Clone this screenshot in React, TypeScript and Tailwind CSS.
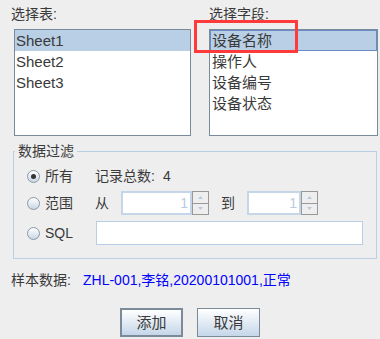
import React from 'react';

const FONT = 'font-["Liberation_Sans","Noto_Sans_CJK_SC",sans-serif]';

const TABLES = ['Sheet1', 'Sheet2', 'Sheet3'];
const FIELDS = ['设备名称', '操作人', '设备编号', '设备状态'];

const Radio = ({ checked }: { checked?: boolean }) => (
  <span className="w-[13px] h-[13px] rounded-full border border-[#8a98a8] bg-gradient-to-b from-[#ffffff] to-[#c9d6e4] flex items-center justify-center shrink-0">
    {checked && <span className="w-[5px] h-[5px] rounded-full bg-[#333333]" />}
  </span>
);

const Spinner = ({ width }: { width: string }) => (
  <div className="flex h-[24px]">
    <div className={`${width} h-full bg-white border-2 border-[#c5d6e8] flex items-center justify-end pr-[2px] text-[#b8cbe0] text-[14px]`}>
      1
    </div>
    <div className="w-[17px] h-full flex flex-col">
      <div className="flex-1 border border-[#999999] bg-[#eeeeee] flex items-center justify-center">
        <svg width="5" height="3" viewBox="0 0 5 3"><path d="M0 3 L2.5 0 L5 3 Z" fill="#b8cbe0" /></svg>
      </div>
      <div className="flex-1 border border-t-0 border-[#999999] bg-[#eeeeee] flex items-center justify-center">
        <svg width="5" height="3" viewBox="0 0 5 3"><path d="M0 0 L2.5 3 L5 0 Z" fill="#b8cbe0" /></svg>
      </div>
    </div>
  </div>
);

export default function App() {
  return (
    <div className={`w-[380px] h-[339px] bg-[#eeeeee] relative overflow-hidden text-[14px] text-[#3a3a3a] ${FONT}`}>
      {/* lists */}
      <div className="flex pt-[4px]">
        <div className="ml-[11px] w-[198px] shrink-0">
          <div className="h-[20px] leading-[20px]">选择表:</div>
          <div className="mt-[5px] ml-[3px] w-[177px] h-[107px] bg-white border border-[#7a8a99]">
            {TABLES.map((t, i) => (
              <div key={t} className={`h-[21px] leading-[21px] pl-[1px] text-[15px] ${i === 0 ? 'bg-[#b8cfe5]' : ''}`}>
                {t}
              </div>
            ))}
          </div>
        </div>
        <div className="w-[169px] shrink-0">
          <div className="h-[20px] leading-[20px]">选择字段:</div>
          <div className="mt-[5px] w-[169px] h-[107px] bg-white border border-[#7a8a99]">
            {FIELDS.map((f, i) => (
              <div key={f} className={`h-[21px] leading-[19px] pl-[1px] text-[15px] ${i === 0 ? 'bg-[#b8cfe5] border border-[#6a8cc6]' : 'border border-transparent'}`}>
                {f}
              </div>
            ))}
          </div>
        </div>
      </div>

      {/* annotation box */}
      <div className="absolute left-[194px] top-[20px] w-[104px] h-[33px] border-[3px] border-[#ff3a3a]" />

      {/* filter group */}
      <fieldset className="ml-[13px] mt-[7px] w-[364px] border border-[#b8cfe5] pb-[13px]">
        <legend className="ml-[1px] px-[3px] leading-[16px]">数据过滤</legend>
        <div className="mt-[5px] h-[24px] flex items-center pl-[13px]">
          <Radio checked />
          <span className="ml-[5px] w-[50px]">所有</span>
          <span>记录总数:</span>
          <span className="ml-[8px]">4</span>
        </div>
        <div className="mt-[3px] h-[24px] flex items-center pl-[13px]">
          <Radio />
          <span className="ml-[5px] w-[50px]">范围</span>
          <span className="w-[26px]">从</span>
          <Spinner width="w-[71px]" />
          <span className="ml-[12px] w-[26px]">到</span>
          <Spinner width="w-[54px]" />
        </div>
        <div className="mt-[6px] h-[24px] flex items-center pl-[13px]">
          <Radio />
          <span className="ml-[5px] w-[51px]">SQL</span>
          <div className="w-[267px] h-[24px] bg-white border border-[#b8cfe5]" />
        </div>
      </fieldset>

      {/* sample */}
      <div className="mt-[11px] ml-[11px] h-[20px] leading-[20px] flex">
        <span className="w-[72px]">样本数据:</span>
        <span className="text-[#0000ff]">ZHL-001,李铭,20200101001,正常</span>
      </div>

      {/* buttons */}
      <div className="mt-[18px] flex justify-center gap-[14px]">
        <button className="w-[63px] h-[29px] border-2 border-[#7a8a99] bg-gradient-to-b from-[#ffffff] to-[#c5d6e9] text-[15px] leading-none">
          添加
        </button>
        <button className="w-[63px] h-[29px] border border-[#7a8a99] bg-gradient-to-b from-[#ffffff] to-[#c5d6e9] text-[15px] leading-none">
          取消
        </button>
      </div>
    </div>
  );
}
